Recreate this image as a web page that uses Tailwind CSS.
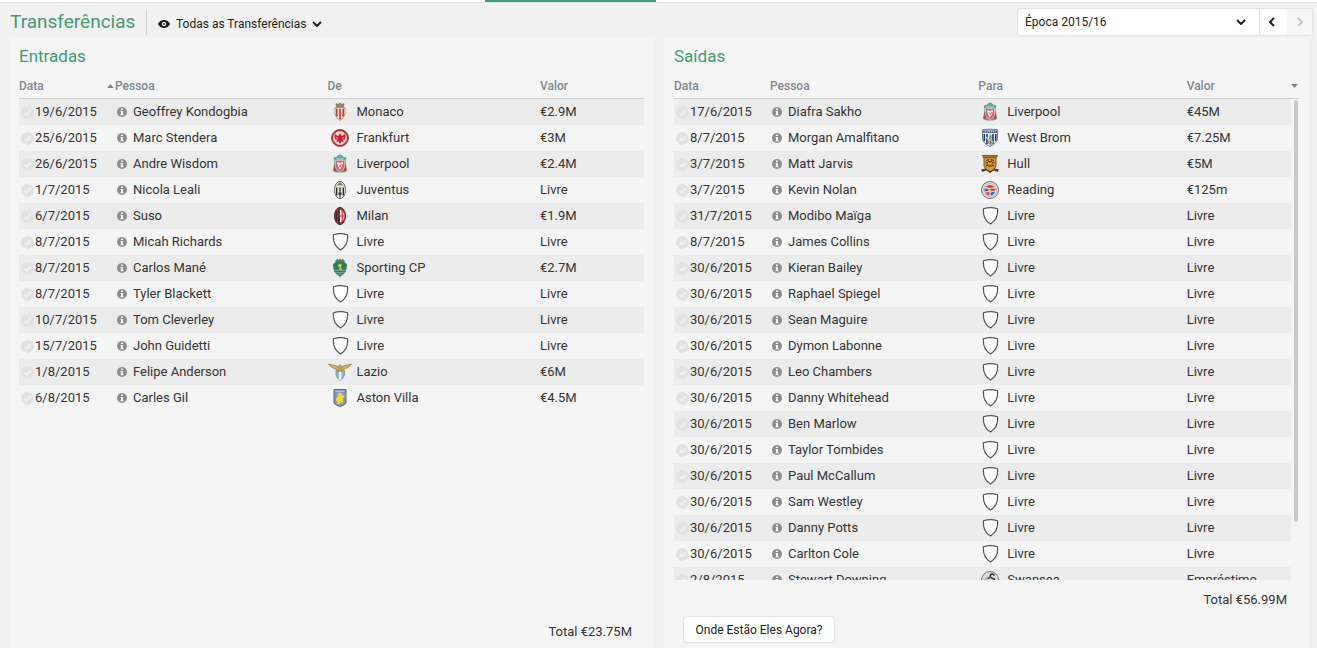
<!DOCTYPE html>
<html lang="pt">
<head>
    <meta charset="UTF-8">
    <meta name="viewport" content="width=device-width, initial-scale=1.0">
    <title>Transferências</title>
    <script src="https://cdn.jsdelivr.net/npm/@tailwindcss/browser@4"></script>
</head>
<body class="flex h-screen flex-col overflow-hidden bg-[#f1f1f1] font-['Roboto',sans-serif] text-[13px] text-[#333]">

    <!-- Crests and row icons -->
    <svg class="hidden" aria-hidden="true">
        <symbol id="check" viewBox="0 0 14 14">
            <circle cx="7" cy="7" r="7" fill="#e2e2e2"/>
            <path d="M3.800 7.400 6 9.400 10.400 4.600" fill="none" stroke="#f2f2f2" stroke-width="1.700"/>
        </symbol>
        <symbol id="info" viewBox="0 0 10 10">
            <circle cx="5" cy="5" r="5" fill="#8c8c8c"/>
            <path d="M4 1.600h2v1.500H4zM3.600 4H6v3.200h.6v1H3.500v-1H4V5h-.4z" fill="#f5f5f5"/>
        </symbol>
        <symbol id="livre" viewBox="0 0 24 20">
            <path d="M5.500 2.800Q12.500 .6 19.500 2.800Q20.500 13.500 12.500 18Q4.500 13.500 5.500 2.800Z" fill="#fff" stroke="#55554f" stroke-width="1.200"/>
        </symbol>
        <symbol id="monaco" viewBox="0 0 24 20">
            <path d="M8 1.500 10 2.500 12 1 14 2.500 16 1.500 15.500 5H8.500Z" fill="#a08a68" stroke="#6e5a46" stroke-width=".6"/>
            <path d="M7 5.500H17V12Q16 16 12 18.500Q8 16 7 12Z" fill="#f4e9dc" stroke="#b08d60" stroke-width=".9"/>
            <path d="M8.800 6.500v8M12 6.500v10.800M15.200 6.500v8" stroke="#d4383e" stroke-width="1.700"/>
        </symbol>
        <symbol id="frankfurt" viewBox="0 0 24 20">
            <circle cx="12" cy="10" r="8.500" fill="#c4202a" stroke="#6f4444" stroke-width=".8"/>
            <circle cx="12" cy="10" r="6.700" fill="#f3dcdc" stroke="#e9b9b9" stroke-width=".8"/>
            <path d="M7 5.500 9 7.500 10.800 7.800 11 6.500 12 5.500 13.200 6.500 13.200 7.800 15 7.500 17 5.500 17.600 9 16.500 11.500 14.500 11.500 16 14 13.500 13.500 12 16 10.500 13.500 8 14 9.500 11.500 7.500 11.500 6.400 9Z" fill="#cf1f2b"/>
            <path d="M8 9.500 10 10M16 9.500 14 10" stroke="#f3dcdc" stroke-width=".7"/>
        </symbol>
        <symbol id="liverpool" viewBox="0 0 24 20">
            <path d="M6 4Q9 3.500 10 1.800L12 .8 14 1.800Q15 3.500 18 4L17 7H7Z" fill="#5fae9f" stroke="#3f8a7e" stroke-width=".6"/>
            <path d="M6.500 7H17.500L18 11 19 17 15.500 18.500H8.500L5 17 6 11Z" fill="#58a394"/>
            <path d="M6 12 7.500 10 8 17 5.500 16.500ZM18 12 16.500 10 16 17 18.500 16.500Z" fill="#b9443e"/>
            <path d="M7.500 6.500H16.500V13.500Q15.500 16 12 17.500Q8.500 16 7.500 13.500Z" fill="#dc5f70" stroke="#f0dede" stroke-width=".6"/>
            <path d="M8.800 8.500 11 8.200 12 9.500 13.500 8 15.200 8.600 14.200 11.500 12.800 14 11.500 15.500 10 12Z" fill="#fbf0f0"/>
            <path d="M11.300 10.800 12.500 12.500 13.500 9.800" fill="none" stroke="#c8374b" stroke-width=".8"/>
            <path d="M8.500 5H15.500" stroke="#d2ece5" stroke-width=".8"/>
        </symbol>
        <symbol id="juventus" viewBox="0 0 24 20">
            <ellipse cx="12" cy="10" rx="5.500" ry="8.600" fill="#f4f4f2" stroke="#55534f" stroke-width=".9"/>
            <path d="M8.700 7.500v8M12 7.500v10M15.300 7.500v8" stroke="#2f2f2f" stroke-width="1.500"/>
            <path d="M8.500 5.500 12 2 15.500 5.500Z" fill="#777"/>
            <path d="M7.200 6.500Q12 8.500 16.800 6.500" fill="none" stroke="#c9ad5c" stroke-width="1.200"/>
            <path d="M10.300 12h3.400v2.500L12 16.500l-1.700-2z" fill="#3d3d3d" stroke="#d5d5cf" stroke-width=".5"/>
        </symbol>
        <symbol id="milan" viewBox="0 0 24 20">
            <ellipse cx="12" cy="10" rx="5.500" ry="8.600" fill="#b02a36" stroke="#4b3035" stroke-width="1"/>
            <path d="M8.300 5v10M10.800 2.500v15" stroke="#3a1d24" stroke-width="1"/>
            <path d="M12 3.500Q16.800 6 16.500 10Q16.800 14 12 16.500Z" fill="#f0e2e2"/>
            <path d="M14.300 4.500v11M12 10h4.400" stroke="#d23a46" stroke-width="1.200"/>
        </symbol>
        <symbol id="sporting" viewBox="0 0 24 20">
            <path d="M7.500 2.800 9.500 1l1 1.500L12 .8l1.500 1.700 1-1.500 2 1.800-1 1.700h-7Z" fill="#5a8470" stroke="#3f6755" stroke-width=".5"/>
            <path d="M8 4Q12 3 16 4L18.500 6Q18.500 13 16 15.500L12 18.500 8 15.500Q5.500 13 5.500 6Z" fill="#27805b" stroke="#4c7564" stroke-width=".8"/>
            <path d="M6.500 12.500h11M7.200 14.500h9.600M9 16.300h6" stroke="#8dbca5" stroke-width=".7"/>
            <path d="M10.500 6.500 12.500 5.500 14 7 13 8.500 14 12H11L11.800 9.500 10 8.500Z" fill="#c6c351"/>
        </symbol>
        <symbol id="lazio" viewBox="0 0 24 20">
            <path d="M8 8.500H16.500V13Q15.500 16.500 12.200 18.500Q9 16.500 8 13Z" fill="#82b7dc" stroke="#83888a" stroke-width=".8"/>
            <path d="M11 9h2.500v8.500l-1.300.8-1.200-.8z" fill="#eaf3f8"/>
            <path d="M.5 2Q6 3 10 4.500L12 2.800 14 4.500Q18 3 23.500 2L20 5.500 16.500 7 13.500 10 12 8.500 10.500 10 7.500 7 4 5.500Z" fill="#c69b4d" stroke="#86714d" stroke-width=".6"/>
            <path d="M3 3.500 9.500 6.500M21 3.500 14.500 6.500" stroke="#efd391" stroke-width=".7"/>
        </symbol>
        <symbol id="villa" viewBox="0 0 24 20">
            <path d="M6 1.500H18V15Q17 17 12 18.500Q7 17 6 15Z" fill="#8297c5" stroke="#61657b" stroke-width="1"/>
            <path d="M7.500 3.200h9" stroke="#c9d2e5" stroke-width=".9"/>
            <path d="M9.500 6 12 4.800 14.500 5.500 14.500 7.500 16.500 7 16 10 14.800 10.500 15.500 15 13 14 11 16.500 9 15.500 10 12.500 8 13.500 8 10 9.500 9Z" fill="#eedc34"/>
        </symbol>
        <symbol id="westbrom" viewBox="0 0 24 20">
            <path d="M4.500 1.800Q12 .5 19.500 1.800V10Q19 15.500 12 18.500Q5 15.500 4.500 10Z" fill="#eef0f4" stroke="#626a81" stroke-width=".9"/>
            <path d="M6.300 6v7M9 6v10M15 6v10M17.700 6v7" stroke="#233468" stroke-width="1.600"/>
            <path d="M5.200 2.500H18.800V5H5.200Z" fill="#44568a"/>
            <path d="M6.500 3.800h11" stroke="#dfe3ee" stroke-width="1" stroke-dasharray="1.300 .8"/>
            <path d="M12 5.500 14 8 13.500 12 16 15 12.500 17.500 9 14 11 10Z" fill="#7aa58c"/>
            <path d="M8 9 12 13 15 14" fill="none" stroke="#d8d8cd" stroke-width="1.200"/>
            <circle cx="12.500" cy="14" r="1" fill="#c45b4b"/>
        </symbol>
        <symbol id="hull" viewBox="0 0 24 20">
            <path d="M4.500 1.500H19.500L18 4V12Q17 15.500 12 18.500Q7 15.500 6 12V4Z" fill="#e29a2b" stroke="#5e4c39" stroke-width=".9"/>
            <path d="M5.500 2.500h13v1.700h-13z" fill="#6e5c3e"/>
            <path d="M8 6.500 11 5.500M13 5.500 16 6.500M7.500 9 10 8.500M14 8.500 16.500 9M8 12 10.500 10.500M13.500 10.500 16 12M10 7l2 1 2-1M10.500 12.500Q12 11 13.500 12.500" fill="none" stroke="#47341d" stroke-width="1.100"/>
            <path d="M3 15.500 7 14.500 12 17 17 14.500 21 15.500 19.500 18 16 16.500 12 18.500 8 16.500 4.500 18Z" fill="#4c4338"/>
        </symbol>
        <symbol id="reading" viewBox="0 0 24 20">
            <circle cx="12" cy="10" r="8.500" fill="#dcdcdc" stroke="#626262" stroke-width=".9"/>
            <circle cx="12" cy="10" r="6.200" fill="#f4f4f4" stroke="#a0a0a0" stroke-width=".6"/>
            <path d="M7 7Q12 3 17 7L12 8Z" fill="#db3c36"/>
            <path d="M6.500 8.500 12 9V11L6.500 11.500ZM12.500 12.500 17 11.500Q15.500 15.500 12.500 15.500Z" fill="#2d6ab5"/>
            <path d="M12 8.500H17.500V10.500L12 11.500ZM7 12.500 11.500 12V15.500Q8.500 15 7 12.500Z" fill="#d9463d"/>
            <circle cx="11.500" cy="10.500" r="1.500" fill="#e6c352"/>
        </symbol>
        <symbol id="swansea" viewBox="0 0 24 20">
            <circle cx="12" cy="10" r="8.500" fill="#dedede" stroke="#777" stroke-width="1"/>
            <path d="M5.500 9Q8 8 10 5Q8.500 11 7 13Z" fill="#b5b5b5"/>
            <path d="M16.500 5.500Q14 2.800 12.500 5T15 8.500T12.500 12.500Q10 12.500 9 10M9.500 8.500 11.500 8" fill="none" stroke="#2b2b2b" stroke-width="1.400"/>
        </symbol>
    </svg>

    <!-- Tab strip -->
    <div class="flex h-[3px] shrink-0 border-b border-[#e4e4e4] bg-white">
        <div class="ml-[485px] w-[171px] bg-[#3f9b76]"></div>
    </div>

    <header class="flex h-[35px] shrink-0 items-center justify-between pr-[5px] pl-2.5">
        <div class="flex items-center">
            <h1 class="w-[136px] pt-0.5 text-[19px] leading-6 whitespace-nowrap text-[#3f9b76]">Transferências</h1>
            <div class="mt-[3px] flex h-[26px] items-center border-l border-[#cfcfcf] pl-[11px]">
                <svg class="mt-[3px] mr-1.5 h-2 w-3" viewBox="0 0 12 8" aria-hidden="true">
                    <path d="M0 4Q2 0 6 0T12 4Q10 8 6 8T0 4Z" fill="#1c1c1c"/>
                    <circle cx="6" cy="4" r="2.200" fill="#f1f1f1"/>
                    <circle cx="6" cy="4" r="1" fill="#1c1c1c"/>
                </svg>
                <div class="relative mt-[3px] flex items-center">
                    <select aria-label="Filtro" class="w-[146px] appearance-none text-xs text-[#222]">
                        <option>Todas as Transferências</option>
                    </select>
                    <svg class="pointer-events-none absolute right-0 h-1.5 w-2.5" viewBox="0 0 10 6" aria-hidden="true"><path d="M1 1 5 5 9 1" fill="none" stroke="#1c1c1c" stroke-width="2"/></svg>
                </div>
            </div>
        </div>
        <div class="mt-[3px] flex h-[26px] rounded-[3px] bg-white shadow-[0_0_2px_rgba(0,0,0,0.2)]">
            <div class="relative flex items-center border-r border-[#e2e2e2]">
                <select aria-label="Época" class="h-full w-[241px] appearance-none pl-[7px] text-xs text-[#222]">
                    <option>Época 2015/16</option>
                </select>
                <svg class="pointer-events-none absolute right-[13px] h-1.5 w-2.5" viewBox="0 0 10 6" aria-hidden="true"><path d="M1 1 5 5 9 1" fill="none" stroke="#1c1c1c" stroke-width="2"/></svg>
            </div>
            <button aria-label="Época anterior" class="flex w-[27px] items-center justify-center pr-[3px]">
                <svg class="h-2.5 w-1.5" viewBox="0 0 6 10" aria-hidden="true"><path d="M5 1 1 5 5 9" fill="none" stroke="#1c1c1c" stroke-width="2"/></svg>
            </button>
            <button aria-label="Época seguinte" disabled class="flex w-[25px] items-center justify-center rounded-r-[3px] bg-[#f6f6f6]">
                <svg class="h-2.5 w-1.5" viewBox="0 0 6 10" aria-hidden="true"><path d="M1 1 5 5 1 9" fill="none" stroke="#c6c6c6" stroke-width="2"/></svg>
            </button>
        </div>
    </header>

    <main class="grid min-h-0 flex-1 grid-cols-2 gap-2.5 pr-2 pl-[9px]">

        <!-- Entradas -->
        <section class="flex min-h-0 flex-col rounded-t bg-[#f5f5f5] px-2.5 pt-1.5">
            <h2 class="mb-1.5 text-[17px] leading-6 text-[#3f9b76]">Entradas</h2>
            <div class="min-h-0 flex-1 overflow-hidden">
                <table class="w-full table-fixed border-separate border-spacing-0 text-left">
                    <thead class="text-xs text-[#7f8790]">
                        <tr class="h-[25px] *:border-b *:border-[#cfcfcf]">
                            <th class="w-24 font-medium">
                                <div class="flex items-center justify-between">Data
                                    <svg class="mr-px h-1 w-[7px]" viewBox="0 0 7 4" aria-hidden="true"><path d="M0 4 3.500 0 7 4Z" fill="#7f8790"/></svg>
                                </div>
                            </th>
                            <th class="w-[34%] font-medium">Pessoa</th>
                            <th class="w-[34%] font-medium">De</th>
                            <th class="font-medium">Valor</th>
                        </tr>
                    </thead>
                    <tbody id="entradas"></tbody>
                </table>
            </div>
            <p class="pr-3 pb-2 text-right leading-4">Total €23.75M</p>
        </section>

        <!-- Saídas -->
        <section class="flex min-h-0 flex-col rounded-t bg-[#f5f5f5] px-2.5 pt-1.5">
            <h2 class="mb-1.5 text-[17px] leading-6 text-[#3f9b76]">Saídas</h2>
            <div class="relative min-h-0 flex-1 overflow-hidden">
                <table class="w-full table-fixed border-separate border-spacing-0 text-left">
                    <thead class="text-xs text-[#7f8790]">
                        <tr class="h-[25px] *:border-b *:border-[#cfcfcf]">
                            <th class="w-24 font-medium">Data</th>
                            <th class="w-1/3 font-medium">Pessoa</th>
                            <th class="w-1/3 font-medium">Para</th>
                            <th class="font-medium">Valor</th>
                            <th class="w-2" aria-label="Ordenar">
                                <svg class="h-1 w-[7px]" viewBox="0 0 7 4" aria-hidden="true"><path d="M0 0H7L3.500 4Z" fill="#7f8790"/></svg>
                            </th>
                        </tr>
                    </thead>
                    <tbody id="saidas"></tbody>
                </table>
                <!-- Scrollbar -->
                <div class="absolute top-[26px] right-px h-[422px] w-1 rounded-full bg-[#c9c9c9]"></div>
            </div>
            <p class="pt-3 pr-3 text-right leading-4">Total €56.99M</p>
            <div class="pt-[9px] pb-1.5 pl-2.5">
                <button class="h-[25px] w-[150px] rounded-[3px] bg-white text-xs text-[#222] shadow-[0_0_2px_rgba(0,0,0,0.25)]">Onde Estão Eles Agora?</button>
            </div>
        </section>
    </main>

    <script>
        // date, player, club, fee, crest
        const entradas = [
            ['19/6/2015', 'Geoffrey Kondogbia', 'Monaco', '€2.9M', 'monaco'],
            ['25/6/2015', 'Marc Stendera', 'Frankfurt', '€3M', 'frankfurt'],
            ['26/6/2015', 'Andre Wisdom', 'Liverpool', '€2.4M', 'liverpool'],
            ['1/7/2015', 'Nicola Leali', 'Juventus', 'Livre', 'juventus'],
            ['6/7/2015', 'Suso', 'Milan', '€1.9M', 'milan'],
            ['8/7/2015', 'Micah Richards', 'Livre', 'Livre', 'livre'],
            ['8/7/2015', 'Carlos Mané', 'Sporting CP', '€2.7M', 'sporting'],
            ['8/7/2015', 'Tyler Blackett', 'Livre', 'Livre', 'livre'],
            ['10/7/2015', 'Tom Cleverley', 'Livre', 'Livre', 'livre'],
            ['15/7/2015', 'John Guidetti', 'Livre', 'Livre', 'livre'],
            ['1/8/2015', 'Felipe Anderson', 'Lazio', '€6M', 'lazio'],
            ['6/8/2015', 'Carles Gil', 'Aston Villa', '€4.5M', 'villa']
        ];
        const saidas = [
            ['17/6/2015', 'Diafra Sakho', 'Liverpool', '€45M', 'liverpool'],
            ['8/7/2015', 'Morgan Amalfitano', 'West Brom', '€7.25M', 'westbrom'],
            ['3/7/2015', 'Matt Jarvis', 'Hull', '€5M', 'hull'],
            ['3/7/2015', 'Kevin Nolan', 'Reading', '€125m', 'reading'],
            ['31/7/2015', 'Modibo Maïga', 'Livre', 'Livre', 'livre'],
            ['8/7/2015', 'James Collins', 'Livre', 'Livre', 'livre'],
            ['30/6/2015', 'Kieran Bailey', 'Livre', 'Livre', 'livre'],
            ['30/6/2015', 'Raphael Spiegel', 'Livre', 'Livre', 'livre'],
            ['30/6/2015', 'Sean Maguire', 'Livre', 'Livre', 'livre'],
            ['30/6/2015', 'Dymon Labonne', 'Livre', 'Livre', 'livre'],
            ['30/6/2015', 'Leo Chambers', 'Livre', 'Livre', 'livre'],
            ['30/6/2015', 'Danny Whitehead', 'Livre', 'Livre', 'livre'],
            ['30/6/2015', 'Ben Marlow', 'Livre', 'Livre', 'livre'],
            ['30/6/2015', 'Taylor Tombides', 'Livre', 'Livre', 'livre'],
            ['30/6/2015', 'Paul McCallum', 'Livre', 'Livre', 'livre'],
            ['30/6/2015', 'Sam Westley', 'Livre', 'Livre', 'livre'],
            ['30/6/2015', 'Danny Potts', 'Livre', 'Livre', 'livre'],
            ['30/6/2015', 'Carlton Cole', 'Livre', 'Livre', 'livre'],
            ['2/8/2015', 'Stewart Downing', 'Swansea', 'Empréstimo', 'swansea']
        ];

        function renderRows(id, rows) {
            document.getElementById(id).innerHTML = rows.map(([date, player, club, fee, crest]) => `
                <tr class="h-[26px] odd:*:bg-[#ececec] whitespace-nowrap">
                    <td><div class="flex items-center pl-0.5"><svg class="mr-px h-[13px] w-[13px]"><use href="#check"/></svg>${date}</div></td>
                    <td><div class="flex items-center gap-1.5 pl-0.5"><svg class="h-2.5 w-2.5"><use href="#info"/></svg>${player}</div></td>
                    <td><div class="flex items-center gap-[5px]"><svg class="h-5 w-6"><use href="#${crest}"/></svg>${club}</div></td>
                    <td>${fee}</td>
                </tr>`).join('');
        }

        renderRows('entradas', entradas);
        renderRows('saidas', saidas);
    </script>
</body>
</html>
